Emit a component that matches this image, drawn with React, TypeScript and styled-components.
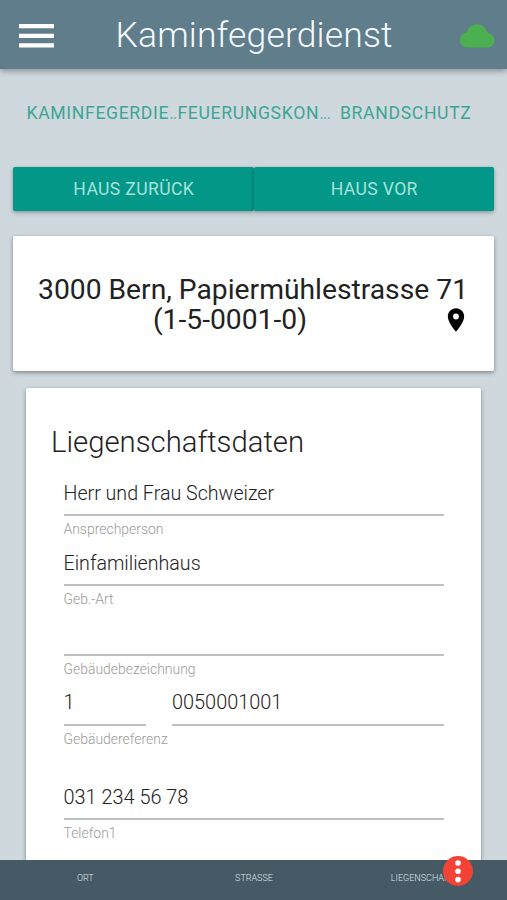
import React from "react";
import styled, { createGlobalStyle } from "styled-components";

const GlobalStyle = createGlobalStyle`
  *, *::before, *::after { box-sizing: border-box; }
  body {
    margin: 0;
    background: #ced8dd;
    font-family: Roboto, "Noto Sans", sans-serif;
    font-weight: 400;
    color: #222;
  }
`;

const Screen = styled.div`
  display: flex;
  flex-direction: column;
  height: 900px;
  overflow: hidden;
`;

const Header = styled.header`
  display: grid;
  grid-template-columns: 54px 1fr 54px;
  align-items: center;
  flex: none;
  height: 69px;
  padding-bottom: 1px;
  background: #607d8c;
  box-shadow: 0 2px 6px rgba(0, 0, 0, 0.35);
`;

const MenuIcon = styled.svg`
  display: block;
  width: 35px;
  height: 24px;
  margin: 3px 0 0 19px;
  fill: #fff;
`;

const CloudIcon = styled.svg`
  display: block;
  width: 35px;
  height: 24px;
  margin: 3px 0 0 7px;
  fill: #4caf50;
`;

const Title = styled.h1`
  margin: 2px 0 0 1px;
  font-size: 35.5px;
  font-weight: 300;
  line-height: 46px;
  letter-spacing: 0.15px;
  text-align: center;
  color: #f4f9ff;
`;

const Content = styled.main`
  flex: 1;
  min-height: 0;
  overflow: hidden;
  padding: 0 13px;
`;

const Tabs = styled.nav`
  display: grid;
  grid-template-columns: repeat(3, 1fr);
  height: 61px;
  margin: 14px 13px 23px;
`;

const Tab = styled.a<{ $centered?: boolean }>`
  padding-left: 0.5px;
  font-size: 17.6px;
  line-height: 61px;
  letter-spacing: 0.66px;
  color: #3ea596;
  white-space: nowrap;
  text-align: ${(p) => (p.$centered ? "center" : "left")};
`;

const Dots = styled.span<{ $spacing: number }>`
  letter-spacing: ${(p) => p.$spacing}px;
  opacity: 0.65;
`;

const ButtonRow = styled.div`
  display: grid;
  grid-template-columns: 1fr 1fr;
  margin-bottom: 26px;
`;

const Button = styled.button`
  height: 43.5px;
  padding: 1px 0 0 1px;
  border: 0;
  border-radius: 2px;
  background: #039788;
  box-shadow: 0 2px 4px rgba(0, 0, 0, 0.26), 0 0 2px rgba(0, 0, 0, 0.15);
  font: 400 17.6px/43px Roboto, sans-serif;
  letter-spacing: 0.35px;
  color: #a5e3dc;
`;

const Card = styled.section`
  background: #fff;
  border-radius: 2px;
  box-shadow: 0 2px 5px rgba(0, 0, 0, 0.26), 0 1px 3px rgba(0, 0, 0, 0.16);
`;

const AddressCard = styled(Card)`
  height: 135px;
  margin-top: -0.5px;
  padding: 39px 26px 0 25px;
`;

const Address = styled.h2`
  margin: 0;
  font-size: 28.25px;
  font-weight: 400;
  line-height: 30px;
  text-align: center;
  white-space: nowrap;
`;

const AddressSecondLine = styled.div`
  display: grid;
  grid-template-columns: 1fr 24px;
`;

const AddressNumber = styled.span`
  padding-right: 22px;
`;

const PinIcon = styled.svg`
  display: block;
  width: 28px;
  height: 28px;
  margin: 1px 0 0 -2px;
  fill: #000;
`;

const DataCard = styled(Card)`
  height: 560px;
  margin: 17px 13px 0;
  padding: 36px 37px 0 25px;
`;

const CardTitle = styled.h3`
  margin: 0;
  font-size: 29.3px;
  font-weight: 300;
  line-height: 36px;
  white-space: nowrap;
`;

const Form = styled.div`
  padding: 13px 0 0 12.5px;
`;

const FieldRow = styled.div<{ $extra?: number }>`
  display: grid;
  grid-template-columns: ${(p) => (p.$extra ? "82.5px 1fr" : "1fr")};
  column-gap: 26px;
  margin-bottom: ${(p) => p.$extra ?? 0}px;
`;

const Field = styled.div`
  height: 70px;
`;

const Value = styled.div<{ $digits?: boolean }>`
  height: 42.5px;
  border-bottom: 2px solid #bebebe;
  font-size: ${(p) => (p.$digits ? 19.9 : 19.65)}px;
  line-height: ${(p) => (p.$digits ? 40.5 : 42)}px;
  white-space: nowrap;
  font-weight: 300;
  color: #222;
`;

const Label = styled.div`
  font-size: 13.95px;
  font-weight: 300;
  line-height: 26.5px;
  color: #9a9a9a;
  white-space: nowrap;
`;

const Footer = styled.footer`
  position: relative;
  z-index: 1;
  flex: none;
  display: grid;
  grid-template-columns: repeat(3, 1fr);
  height: 40px;
  padding-left: 1px;
  background: #455a64;
  text-align: center;
  font-size: 9px;
  font-weight: 300;
  line-height: 37px;
  color: #dce3e7;
`;

const FloatingAction = styled.button`
  position: absolute;
  top: -4px;
  left: 443px;
  width: 30px;
  height: 30px;
  padding: 0;
  border: 0;
  border-radius: 50%;
  background: #f44336;
`;

const MoreIcon = styled.svg`
  display: block;
  width: 30px;
  height: 30px;
  fill: #fff;
`;

const App = () => (
  <>
    <GlobalStyle />
    <Screen>
      <Header>
        <MenuIcon viewBox="0 0 35 24">
          <path d="M0 0h35v4.3H0zM0 9.8h35v4.3H0zM0 19.3h35v4.3H0z" />
        </MenuIcon>
        <Title>Kaminfegerdienst</Title>
        <CloudIcon viewBox="0 0 35 24">
          <path d="M7.5 23.5C3 23.5 0 20.2 0 16.3 0 12 3 9 6.500 8.200 9 3 12 0.300 17 0.300c5 0 8.300 2.700 10.800 8.700 4 1 6.700 3.700 6.700 7.300 0 4-3 7.200-7 7.200z" />
        </CloudIcon>
      </Header>
      <Content>
        <Tabs>
          <Tab>KAMINFEGERDIE<Dots $spacing={-1}>..</Dots></Tab>
          <Tab>FEUERUNGSKON<Dots $spacing={-1}>...</Dots></Tab>
          <Tab $centered>BRANDSCHUTZ</Tab>
        </Tabs>
        <ButtonRow>
          <Button>HAUS ZURÜCK</Button>
          <Button>HAUS VOR</Button>
        </ButtonRow>
        <AddressCard>
          <Address>
            3000 Bern, Papiermühlestrasse 71
            <AddressSecondLine>
              <AddressNumber>(1-5-0001-0)</AddressNumber>
              <PinIcon viewBox="0 0 24 24">
                <path d="M12 2C8.13 2 5 5.13 5 9c0 5.25 7 13 7 13s7-7.75 7-13c0-3.87-3.13-7-7-7zm0 9.5a2.5 2.5 0 1 1 0-5 2.5 2.5 0 0 1 0 5z" />
              </PinIcon>
            </AddressSecondLine>
          </Address>
        </AddressCard>
        <DataCard>
          <CardTitle>Liegenschaftsdaten</CardTitle>
          <Form>
            <FieldRow>
              <Field>
                <Value>Herr und Frau Schweizer</Value>
                <Label>Ansprechperson</Label>
              </Field>
            </FieldRow>
            <FieldRow>
              <Field>
                <Value>Einfamilienhaus</Value>
                <Label>Geb.-Art</Label>
              </Field>
            </FieldRow>
            <FieldRow>
              <Field>
                <Value />
                <Label>Gebäudebezeichnung</Label>
              </Field>
            </FieldRow>
            <FieldRow $extra={24.5}>
              <Field>
                <Value $digits>1</Value>
                <Label>Gebäudereferenz</Label>
              </Field>
              <Field>
                <Value $digits>0050001001</Value>
              </Field>
            </FieldRow>
            <FieldRow>
              <Field>
                <Value $digits>031 234 56 78</Value>
                <Label>Telefon1</Label>
              </Field>
            </FieldRow>
          </Form>
        </DataCard>
      </Content>
      <Footer>
        <span>ORT</span>
        <span>STRASSE</span>
        <span>LIEGENSCHAFT</span>
        <FloatingAction aria-label="Mehr">
          <MoreIcon viewBox="0 0 30 30">
            <circle cx="15" cy="7" r="2.8" />
            <circle cx="15" cy="15.3" r="2.8" />
            <circle cx="15" cy="23.6" r="2.8" />
          </MoreIcon>
        </FloatingAction>
      </Footer>
    </Screen>
  </>
);

export default App;
